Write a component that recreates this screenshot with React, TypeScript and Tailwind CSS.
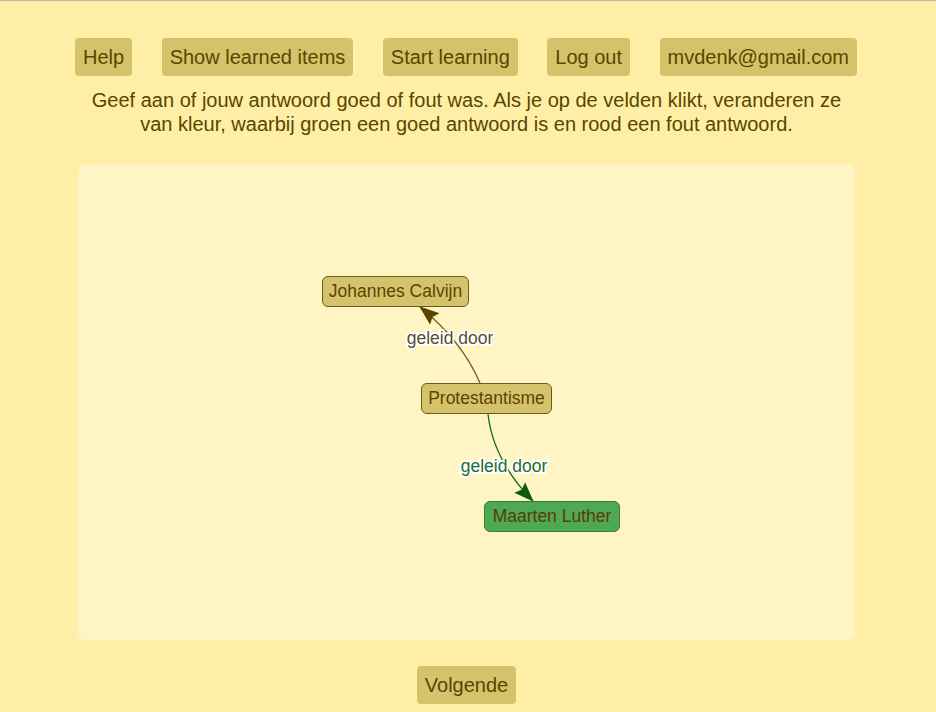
import React from "react";

const menu = ["Help", "Show learned items", "Start learning", "Log out", "mvdenk@gmail.com"];

const btn =
  "h-[38px] flex items-center whitespace-nowrap px-2 rounded-[4px] bg-[#d4c36a] text-[20px] text-[#5a4500]";

// graph nodes, positioned on the panel's canvas
const nodes = [
  { label: "Johannes Calvijn", left: 244, top: 112, w: 147, green: false },
  { label: "Protestantisme", left: 343, top: 219, w: 131, green: false },
  { label: "Maarten Luther", left: 406, top: 337, w: 136, green: true },
];

const Graph = () => (
  <div className="relative h-[476px] w-full">
    <svg className="absolute inset-0" width="777" height="476">
      <defs>
        <marker id="arrowDark" viewBox="0 0 20 20" refX="19" refY="10" markerWidth="20" markerHeight="20" markerUnits="userSpaceOnUse" orient="auto">
          <path d="M0 2.5 L20 10 L0 17.5 L3 10 Z" fill="#5a4500" />
        </marker>
        <marker id="arrowGreen" viewBox="0 0 20 20" refX="19" refY="10" markerWidth="20" markerHeight="20" markerUnits="userSpaceOnUse" orient="auto">
          <path d="M0 2.5 L20 10 L0 17.5 L3 10 Z" fill="#0b5c0b" />
        </marker>
      </defs>
      <path d="M402 219 Q384 177 342 143" fill="none" stroke="#6b5a1c" strokeWidth="1.3" markerEnd="url(#arrowDark)" />
      <path d="M410 250 Q415 296 455 337" fill="none" stroke="#0f6a12" strokeWidth="1.3" markerEnd="url(#arrowGreen)" />
      <text x="372" y="180" textAnchor="middle" fontSize="17.5" fontFamily="'Liberation Sans', Arial, sans-serif" fill="#574d33" stroke="#ffffff" strokeWidth="3.5" paintOrder="stroke">
        geleid door
      </text>
      <text x="426" y="308" textAnchor="middle" fontSize="17.5" fontFamily="'Liberation Sans', Arial, sans-serif" fill="#1c6b34" stroke="#ffffff" strokeWidth="3.5" paintOrder="stroke">
        geleid door
      </text>
    </svg>
    {nodes.map((n) => (
      <div
        key={n.label}
        className={
          n.green
            ? "absolute flex h-[31px] items-center justify-center rounded-[6px] border border-[#2f7f2f] bg-[#4fa953] text-[17.5px] text-[#5a3d00]"
            : "absolute flex h-[31px] items-center justify-center rounded-[6px] border border-[#6b5a1c] bg-[#d4c36a] text-[17.5px] text-[#5a4500]"
        }
        style={{ left: n.left, top: n.top, width: n.w }}
      >
        {n.label}
      </div>
    ))}
  </div>
);

export default function App() {
  return (
    <div className="min-h-[712px] border-t border-[#b8b8c0] bg-[#ffefa6] font-['Liberation_Sans',Arial,sans-serif] text-[#5a4500]">
      <div className="flex gap-[29.5px] pl-[75px] pt-[37px]">
        {menu.map((m) => (
          <button key={m} className={btn}>
            {m}
          </button>
        ))}
      </div>
      <div className="ml-[78px] w-[777px]">
        <p className="mt-3 text-center text-[20px] leading-[24px]">
          Geef aan of jouw antwoord goed of fout was. Als je op de velden klikt, veranderen ze van
          kleur, waarbij groen een goed antwoord is en rood een fout antwoord.
        </p>
        <div className="mt-[28px] rounded-lg bg-[#fff4c4]">
          <Graph />
        </div>
        <div className="mt-[26px] flex justify-center">
          <button className={btn}>Volgende</button>
        </div>
      </div>
    </div>
  );
}
